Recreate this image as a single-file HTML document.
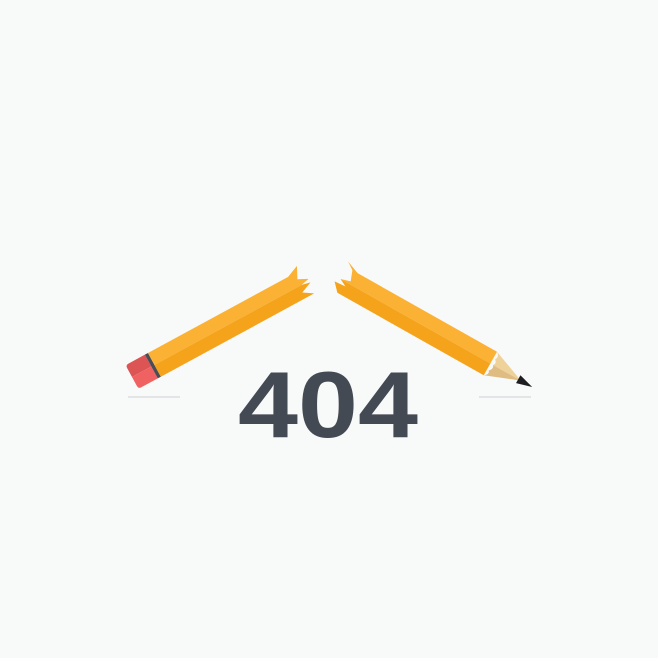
<!DOCTYPE html>
<html><head><style>html,body{margin:0;padding:0;background:#f8f9f9;}svg{display:block}</style></head>
<body>
<svg width="658" height="658" viewBox="0 0 658 658" xmlns="http://www.w3.org/2000/svg">
<rect width="658" height="658" fill="#f8f9f9"/>
<rect x="128" y="396" width="52" height="2" fill="#e3e4e6"/>
<rect x="479" y="396" width="52" height="2" fill="#e3e4e6"/>
<!-- left pencil -->
<g transform="translate(132,377) rotate(-28.5)">
  <path d="M3,-13.5 H22 V0 H0 V-10 Q0,-13.5 3,-13.5Z" fill="#dc5454"/>
  <path d="M0,0 H22 V13.5 H3 Q0,13.5 0,10Z" fill="#f06262"/>
  <rect x="22" y="-13.5" width="3.5" height="27" fill="#4a4d55"/>
  <path d="M25.5,-13.5 H185 L198,-19 L192,-7 L202,-2 L193,0 H25.5Z" fill="#fbb133"/>
  <path d="M25.5,0 H193 L202,2 L190,7 L200,13.5 H25.5Z" fill="#f5a31a"/>
</g>
<!-- right pencil -->
<g transform="translate(344,281) rotate(29.4)">
  <path d="M2,-13.5 L-6,-19 L8,-13.5 H168 V0 H-4 L6,-3 Z" fill="#fbb133"/>
  <path d="M-4,0 H168 V13.5 H0 L-8,5 L4,4 Z" fill="#f5a31a"/>
  <path d="M168,-13.5 Q173,-10 170,-6 Q174,-3 171,0 H203 L168,-13.5Z" fill="#efd29a"/>
  <path d="M171,0 Q174,3 170,7 Q173,10 168,13.5 L203,0Z" fill="#dfbd82"/>
  <path d="M200,-4.5 L216,0 L200,4.5 Z" fill="#1e1e22"/>
</g>
<text x="238" y="437" font-family="Liberation Sans, sans-serif" font-weight="bold" font-size="94" fill="#444a54" textLength="180" lengthAdjust="spacingAndGlyphs">404</text>
</svg>
</body></html>
